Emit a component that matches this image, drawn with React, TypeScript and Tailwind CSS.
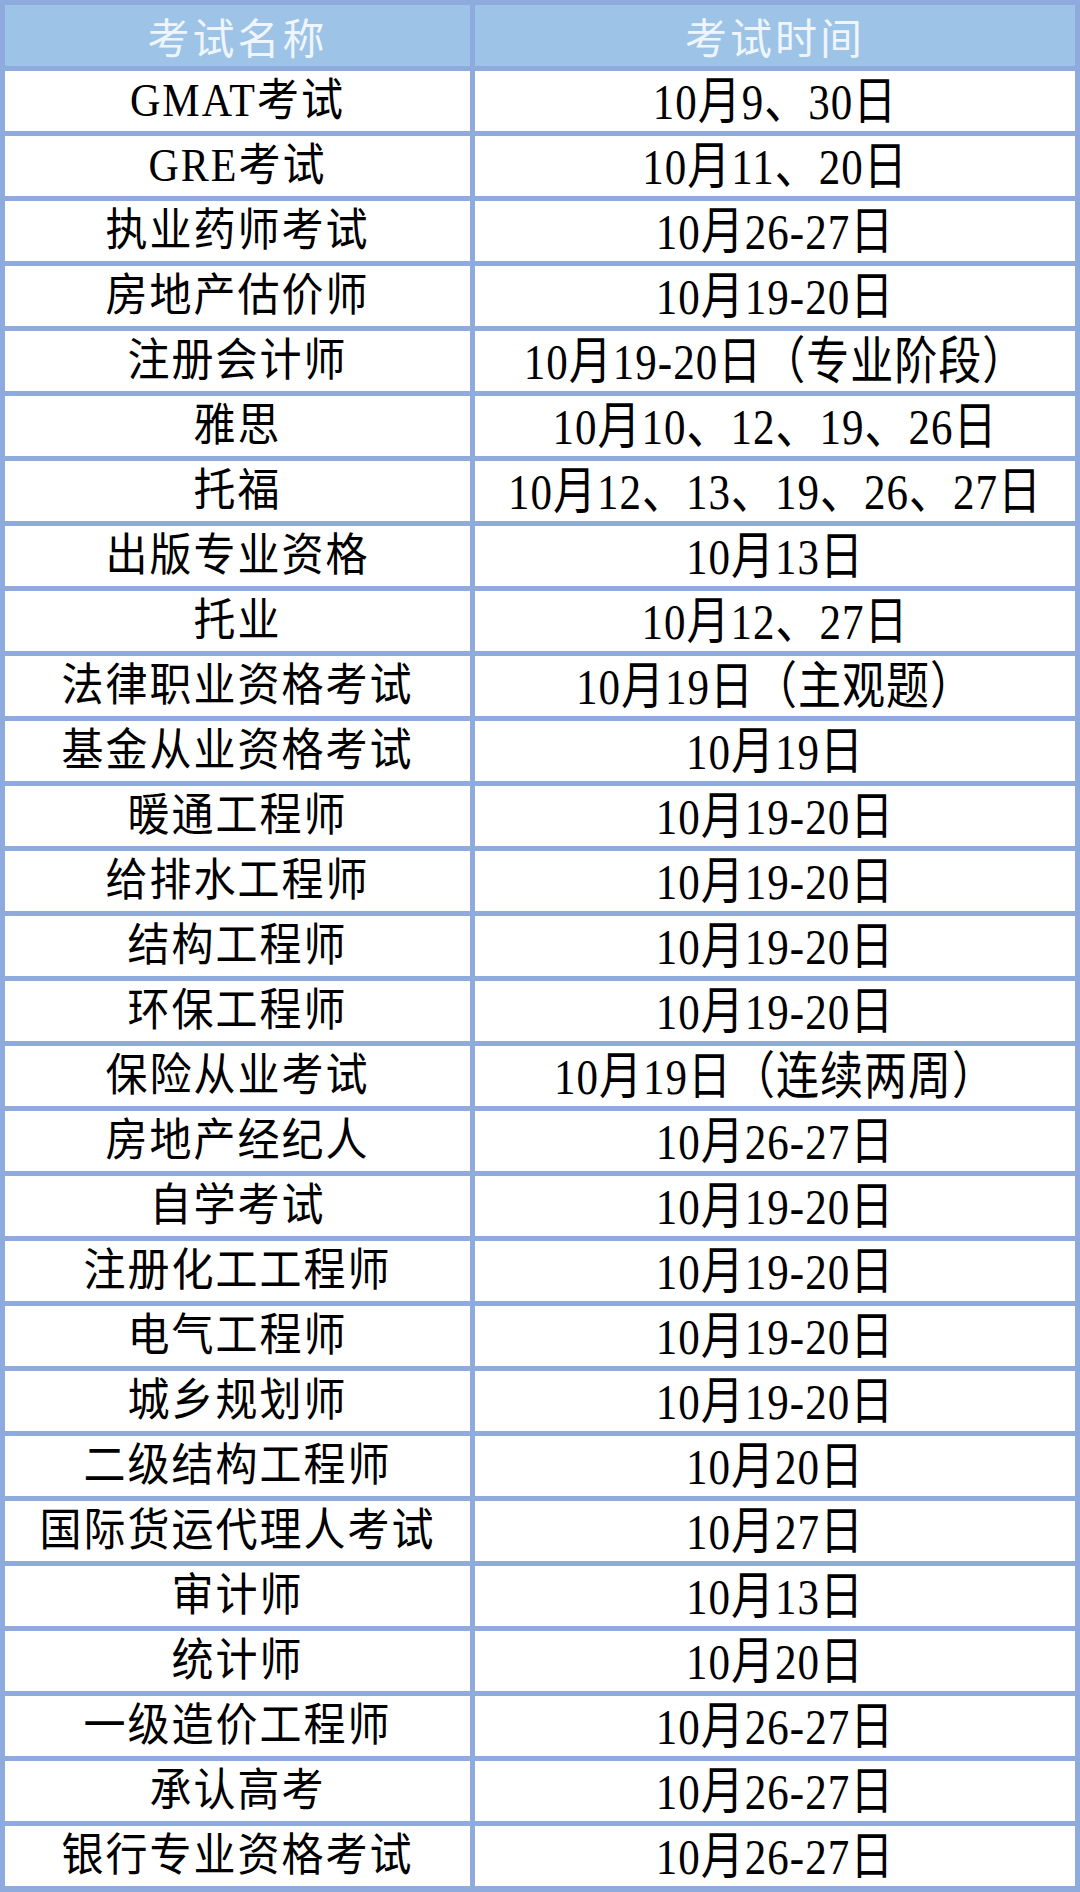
import { Fragment } from "react";

const rows: [string, string][] = [
  ["GMAT考试", "10月9、30日"],
  ["GRE考试", "10月11、20日"],
  ["执业药师考试", "10月26-27日"],
  ["房地产估价师", "10月19-20日"],
  ["注册会计师", "10月19-20日（专业阶段）"],
  ["雅思", "10月10、12、19、26日"],
  ["托福", "10月12、13、19、26、27日"],
  ["出版专业资格", "10月13日"],
  ["托业", "10月12、27日"],
  ["法律职业资格考试", "10月19日（主观题）"],
  ["基金从业资格考试", "10月19日"],
  ["暖通工程师", "10月19-20日"],
  ["给排水工程师", "10月19-20日"],
  ["结构工程师", "10月19-20日"],
  ["环保工程师", "10月19-20日"],
  ["保险从业考试", "10月19日（连续两周）"],
  ["房地产经纪人", "10月26-27日"],
  ["自学考试", "10月19-20日"],
  ["注册化工工程师", "10月19-20日"],
  ["电气工程师", "10月19-20日"],
  ["城乡规划师", "10月19-20日"],
  ["二级结构工程师", "10月20日"],
  ["国际货运代理人考试", "10月27日"],
  ["审计师", "10月13日"],
  ["统计师", "10月20日"],
  ["一级造价工程师", "10月26-27日"],
  ["承认高考", "10月26-27日"],
  ["银行专业资格考试", "10月26-27日"],
];

const font = "font-['Liberation_Serif','Noto_Sans_CJK_SC',serif]";

export default function App() {
  return (
    <div className="w-[1080px] h-[1892px] bg-[#8faadc] pt-[5px] px-[5px] pb-[6px]">
      <div className="grid grid-cols-[465px_600px] gap-[5px]">
        {/* header */}
        <div className="h-[61px] bg-[#9dc3e6] flex items-center justify-center">
          <span className="font-['Noto_Sans_CJK_SC',sans-serif] text-[42px] tracking-[3px] text-[#eef5fc] leading-none">
            考试名称
          </span>
        </div>
        <div className="h-[61px] bg-[#9dc3e6] flex items-center justify-center">
          <span className="font-['Noto_Sans_CJK_SC',sans-serif] text-[42px] tracking-[3px] text-[#eef5fc] leading-none">
            考试时间
          </span>
        </div>

        {rows.map(([name, time]) => (
          <Fragment key={name}>
            <div className="h-[60px] bg-white flex items-center justify-center">
              <span className={`${font} text-[42px] tracking-[2px] text-black leading-none scale-y-[1.08]`}>
                {name}
              </span>
            </div>
            <div className="h-[60px] bg-white flex items-center justify-center">
              <span className={`${font} text-[43px] tracking-[1px] text-black leading-none scale-y-[1.18]`}>
                {time}
              </span>
            </div>
          </Fragment>
        ))}
      </div>
    </div>
  );
}
